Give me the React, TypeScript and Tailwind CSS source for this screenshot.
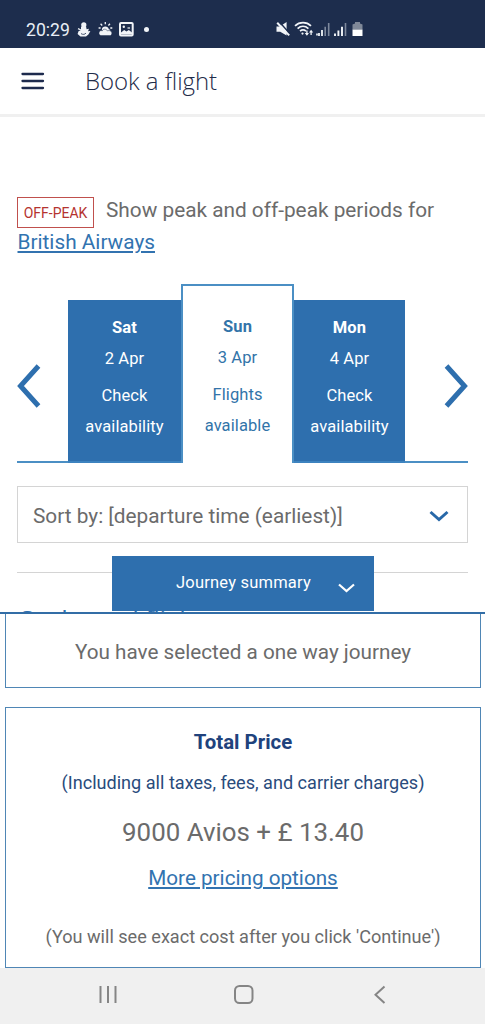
import { ReactNode } from "react";

interface Day {
  name: string;
  date: string;
  status: string[];
}

const days: Day[] = [
  { name: "Sat", date: "2 Apr", status: ["Check", "availability"] },
  { name: "Sun", date: "3 Apr", status: ["Flights", "available"] },
  { name: "Mon", date: "4 Apr", status: ["Check", "availability"] },
];

const StatusBar = () => (
  <div className="flex h-[48px] shrink-0 items-start bg-[#1d2d4d] pl-[26px] text-white">
    <span className="mt-[19px] w-[51px] text-[17.6px] leading-[22px] text-[#e8edf5]">20:29</span>
    <svg className="mt-[22px]" width="14" height="15" viewBox="0 0 14 15" fill="#f1f4f8">
      <circle cx="6.8" cy="2.8" r="2.6" />
      <path d="M4 4.6 9 4.2 9.6 7.2 12 6.8 11 9.2 13.4 9 11.4 12.6 9 14.5H3.5L.6 12 1.5 9.2 4 8Z" />
      <path d="M4 11.6c1.8 1.2 4 1 5-.6" stroke="#1d2d4d" strokeWidth=".8" fill="none" />
      <path d="M1 6.6 4.5 8.200" stroke="#f1f4f8" strokeWidth="1.2" />
    </svg>
    <svg className="ml-[7px] mt-[22px]" width="15" height="14" viewBox="0 0 15 14" fill="#f1f4f8">
      <path d="M3.800 7.200a3.600 3.600 0 0 1 7 0l1.700.9-1.100 1H4.800Z" />
      <path d="M7.300 0v2.200M2.600 1.800l1.600 1.700M12 1.800l-1.600 1.700M.6 6h2M12.300 6h2" stroke="#f1f4f8" strokeWidth="1.300" />
      <path d="M2.800 13.600a2.600 2.600 0 0 1-.3-4.900c.7-.2 1.300 0 1.700.2C5 7 8 6.300 9.500 8.900c2-1 4.900.4 4.300 2.900-.3 1.200-1 1.800-2 1.800Z" stroke="#1d2d4d" strokeWidth=".5" />
    </svg>
    <svg className="ml-[6px] mt-[22px]" width="15" height="15" viewBox="0 0 15 15" fill="none">
      <rect x="1" y="1.100" width="12.700" height="12.500" rx="1" stroke="#f1f4f8" strokeWidth="2" />
      <path d="M2 12.500V10.500L5.200 8l2.200 1.600L9.800 8l3.200 2.500v2Z" fill="#f1f4f8" />
      <circle cx="4.800" cy="4.800" r="1.200" fill="#f1f4f8" />
      <path d="M8.500 6h2.500" stroke="#f1f4f8" strokeWidth="1.200" />
    </svg>
    <span className="ml-[10px] mt-[27px] size-[5px] rounded-full bg-[#f1f4f8]" />
    <svg className="ml-[127px] mt-[21px]" width="15" height="16" viewBox="0 0 15 16">
      <path d="M.5 5.500h3.300L10.600 1v13.400L4.200 10.800H.5Z" fill="#f1f4f8" />
      <path d="M3.500 1 13.600 12.500" stroke="#1d2d4d" strokeWidth="1.500" />
      <path d="m1.200 1.800 12 12.600" stroke="#f1f4f8" strokeWidth="2" />
    </svg>
    <svg className="ml-[3px] mt-[21px]" width="20" height="16" viewBox="0 0 20 16" fill="none" stroke="#f1f4f8" strokeWidth="1.700">
      <path d="M1 4.800c4.600-4.300 11.400-4.300 16 0M3.600 7.600c3.200-2.900 7.600-2.900 10.800 0M6 10.200c1.800-1.500 4.200-1.500 6 0" />
      <circle cx="8.500" cy="12.600" r="1.100" fill="#f1f4f8" stroke="none" />
      <path d="M12.900 9.500v4M17.100 14V10" strokeWidth="1.300" />
      <path d="m10.800 12 2.100 2.800 2.100-2.800ZM15 11.400l2.100-2.600 2.100 2.600Z" fill="#f1f4f8" stroke="none" />
    </svg>
    <svg className="ml-[2px] mt-[22px]" width="15" height="15" viewBox="0 0 15 15">
      <path d="M.2 12.500h1.600M3 11V14M6 8V14" stroke="#f1f4f8" strokeWidth="1.800" />
      <path d="M9.200 4.800V14M12.700 1V14" stroke="#7d889c" strokeWidth="1.600" />
    </svg>
    <svg className="ml-[2px] mt-[22px]" width="15" height="15" viewBox="0 0 15 15">
      <path d="M2 11.500V14M5.400 8.500V14M9 4.800V14" stroke="#f1f4f8" strokeWidth="1.900" />
      <path d="M12.500 1V14" stroke="#7d889c" strokeWidth="1.600" />
    </svg>
    <svg className="ml-[4px] mt-[21px]" width="11" height="16" viewBox="0 0 11 16">
      <path d="M.5 3.600 3 2.600V1h5v1.600l2.500 1V9H.5Z" fill="#7f8898" />
      <path d="M.5 8.700h10V15H.5Z" fill="#fff" />
    </svg>
  </div>
);

const DayTab = ({ day, active }: { day: Day; active?: boolean }) => (
  <div
    className={
      active
        ? "h-[179px] w-[113px] shrink-0 border-x-2 border-t-2 border-[#4b8fc4] bg-white pt-[25px] text-[#3274a9]"
        : "h-[163px] w-[113px] border-b-2 border-[#3d83bf] bg-[#2e6fae] pt-[12px] text-white last:w-[111px]"
    }
  >
    <p className="text-center text-[16.5px] leading-[31px] font-bold tracking-[0.2px]">{day.name}</p>
    <p className="mb-[6px] text-center text-[16.5px] leading-[31px] tracking-[0.1px]">{day.date}</p>
    {day.status.map((line) => (
      <p key={line} className="text-center text-[16.5px] leading-[31px] tracking-[0.1px]">
        {line}
      </p>
    ))}
  </div>
);

const ArrowCell = ({ className, children }: { className: string; children: ReactNode }) => (
  <button className={`flex h-[163px] items-center border-b-2 border-[#4b8fc4] pt-[11px] ${className}`}>
    {children}
  </button>
);

export default function App() {
  return (
    <div className="flex h-[1024px] w-[485px] flex-col overflow-hidden bg-white font-['Roboto',sans-serif] text-[#6b6b6b]">
      <StatusBar />

      <header className="flex h-[69px] shrink-0 items-center border-b-3 border-[#f0f0f0] pl-[21px]">
        <svg width="24" height="18" viewBox="0 0 24 18" className="mt-[-1px]">
          <path d="M1.500 2H22M1.500 9H22M1.500 16H22" stroke="#1d2a4d" strokeWidth="2.300" strokeLinecap="round" />
        </svg>
        <h1 className="ml-[40px] font-['Open_Sans',sans-serif] text-[24px] leading-[32px] font-light tracking-[-0.05px] text-[#1f2c4a]">
          Book a flight
        </h1>
      </header>

      <main className="relative h-[495px] shrink-0 overflow-hidden px-[17px] pt-[78px]">
        <p className="text-[20.8px] leading-[31px] whitespace-nowrap">
          <span className="mr-[12px] inline-block h-[31px] w-[77px] translate-y-[1px] border border-[#c0504d] text-center align-middle text-[14px] leading-[30px] text-[#b5332f]">
            OFF-PEAK
          </span>
          Show peak and off-peak periods for
          <br />
          <a className="ml-[0.5px] text-[#3273b0] underline">British Airways</a>
        </p>

        <div className="mt-[26px] flex items-end">
          <ArrowCell className="w-[51px]">
            <svg width="24" height="44" viewBox="0 0 24 44" fill="none">
              <path d="M21.500 2 3.500 22 21.500 42" stroke="#2e6fae" strokeWidth="5" />
            </svg>
          </ArrowCell>
          <div className="flex w-[337px] items-end">
            <DayTab day={days[0]} />
            <DayTab day={days[1]} active />
            <DayTab day={days[2]} />
          </div>
          <ArrowCell className="w-[63px] justify-end">
            <svg width="24" height="44" viewBox="0 0 24 44" fill="none">
              <path d="M2.500 2 20.500 22 2.500 42" stroke="#2e6fae" strokeWidth="5" />
            </svg>
          </ArrowCell>
        </div>

        <div className="mt-[23px] flex h-[57px] w-[451px] items-center justify-between border border-[#d4d4d4] pt-[2px] pr-[18px] pl-[15px]">
          <span className="text-[20.8px] leading-[30px]">Sort by: [departure time (earliest)]</span>
          <svg width="20" height="12" viewBox="0 0 20 12" fill="none">
            <path d="m1.500 2 8.500 7.500L18.500 2" stroke="#2868a8" strokeWidth="3" />
          </svg>
        </div>

        <hr className="mt-[29px] w-[451px] border-[#d4d4d4]" />
        <h2 className="mt-[29px] font-['Open_Sans',sans-serif] text-[26px] leading-[34px] tracking-[-0.4px] text-[#2e6fae]">
          Outbound flight
        </h2>

        <button className="absolute bottom-[1px] left-[112px] flex h-[55px] w-[262px] bg-[#2e6fae] pt-[17px] pl-[64px] text-white">
          <span className="text-[16.5px] leading-[20px] tracking-[0.2px]">Journey summary</span>
          <svg className="mt-[10px] ml-auto mr-[19px]" width="17" height="10" viewBox="0 0 17 10" fill="none">
            <path d="M1 1.500 8.500 8 16 1.500" stroke="#fff" strokeWidth="2.200" />
          </svg>
        </button>
      </main>

      <section className="flex h-[356px] shrink-0 flex-col border-t-2 border-[#326da6] pr-[4px] pl-[5px]">
        <div className="h-[74px] shrink-0 border border-t-0 border-[#4f86b5] text-center text-[20.7px] leading-[76px]">
          You have selected a one way journey
        </div>
        <div className="mt-[19px] h-[261px] shrink-0 border border-[#4f86b5] text-center">
          <p className="mt-[19px] text-[20.4px] leading-[30px] font-bold text-[#20427c]">Total Price</p>
          <p className="mt-[13px] text-[18.1px] leading-[26px] text-[#294b7c]">
            (Including all taxes, fees, and carrier charges)
          </p>
          <p className="mt-[18px] text-[25.9px] leading-[36px]">9000 Avios + £ 13.40</p>
          <a className="mt-[13px] block text-[20.7px] leading-[30px] text-[#3273b0] underline">
            More pricing options
          </a>
          <p className="mt-[31px] text-[18.1px] leading-[26px]">(You will see exact cost after you click 'Continue')</p>
        </div>
      </section>

      <nav className="flex grow items-start bg-[#f0f0f0]">
        <svg className="mt-[17px] ml-[98px]" width="20" height="20" viewBox="0 0 20 20">
          <path d="M2.500 1v17M10 1v17M17.500 1v17" stroke="#858585" strokeWidth="2" />
        </svg>
        <svg className="mt-[16px] ml-[115px]" width="22" height="21" viewBox="0 0 22 21" fill="none">
          <rect x="2" y="2" width="17.500" height="17" rx="4.500" stroke="#858585" strokeWidth="2" />
        </svg>
        <svg className="mt-[17px] ml-[118px]" width="13" height="20" viewBox="0 0 13 20" fill="none">
          <path d="M11.500 1.500 2.500 9.800l9 8.300" stroke="#858585" strokeWidth="2" />
        </svg>
      </nav>
    </div>
  );
}
